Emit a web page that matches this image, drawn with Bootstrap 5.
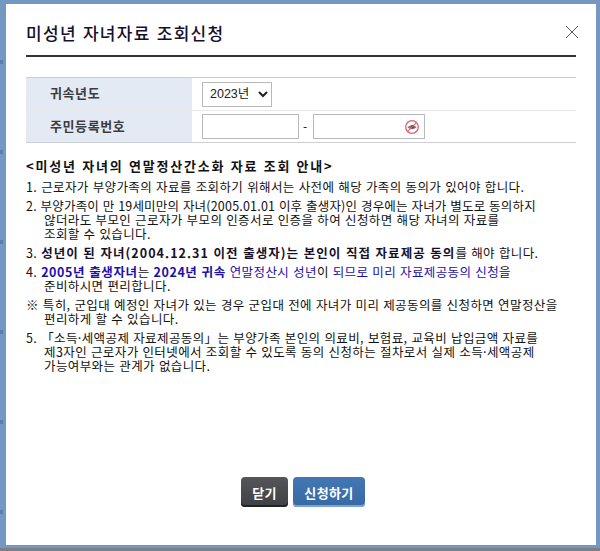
<!DOCTYPE html>
<html lang="ko">
<head>
<meta charset="utf-8">
<title>미성년 자녀자료 조회신청</title>
<link rel="stylesheet" href="https://cdn.jsdelivr.net/npm/bootstrap@5.3.0/dist/css/bootstrap.min.css">
<style>
html,body{height:100%;margin:0;overflow:hidden}
body{background:#7498c1;font-family:"Noto Sans CJK KR","Liberation Sans",sans-serif;color:#111}
.page-wrap{height:551px;padding:4px 4px 3px 6px;display:flex;flex-direction:column;border-bottom:3px solid #7c7f86;
 background-image:repeating-linear-gradient(to bottom,#7498c1 0 60px,#5d7ea6 60px 64px,#7498c1 64px 90px);background-size:3px 100%;background-repeat:no-repeat;background-color:#7498c1}
.sheet{background:#fff;width:590px;height:541px;padding:0 20px;display:flex;flex-direction:column;position:relative;flex:none}
.sheet-title{font-size:17px;line-height:20px;letter-spacing:1.3px;font-weight:500;color:#17102c;margin:19px 0 0;padding-bottom:12px;border-bottom:2px solid #333}
.x-close{position:absolute;left:559px;top:21px;width:14px;height:14px;padding:0;border:0;background:none;line-height:0}
.form-grid{margin-top:20px;border-top:1px solid #c9cdd1;border-bottom:1px solid #ccd0d6}
.form-line{height:32px}
.form-line+.form-line{border-top:1px solid #e8e9eb}
.form-head{width:166px;background:#e4eaf3;font-size:13px;font-weight:700;color:#3c3c40;padding-left:24px;letter-spacing:.6px;line-height:29px;height:100%}
.form-cell{padding-left:10px;gap:4px}
.year-pick{width:70px;height:25px;border:1px solid #b9b9b9;background:#fff;font-size:12.5px;padding:0 0 0 3px;color:#222;border-radius:0;font-family:"Liberation Sans","Noto Sans CJK KR",sans-serif}
.num-in{height:25px;border:1px solid #b9b9b9;border-radius:0;background:#fff;padding:0 4px;outline:0}
.num-a{width:97px}
.num-b{width:112px;position:relative;display:block}
.dash-sep{font-size:12px;line-height:1;width:6px}
.eye-ico{position:absolute;left:90px;top:4px;width:16px;height:16px}
.guide{font-size:12.5px;line-height:14px;margin-top:16px;white-space:nowrap;letter-spacing:.4px;color:#111}
.guide-h{font-weight:700;font-size:13px;letter-spacing:1.8px;line-height:14px;margin-bottom:7px;color:#111}
.gl{margin-bottom:5px;padding-left:18px;text-indent:-18px}
.gl b{font-weight:700;letter-spacing:1.05px;color:#17102c}
.gl .blu{color:#1c10a8}
.gl .blub{color:#1c10a8;font-weight:700;letter-spacing:.6px}
.sp-tight{letter-spacing:.2px}
.act-bar{margin-top:auto;padding-bottom:38px;gap:5px;justify-content:center;padding-left:4px}
.act-btn{height:30px;border-radius:4px;font-size:13px;font-weight:700;color:#fff;padding:0;line-height:27px;border:0;letter-spacing:.4px}
.act-dark{width:47px;background:linear-gradient(#55565a,#3f4043);box-shadow:inset 0 -2px 0 #232325}
.act-blue{width:72px;background:linear-gradient(#4378b4,#3768a3);box-shadow:inset 0 -2px 0 #7fa3cf}
</style>
</head>
<body>
<div class="page-wrap">
  <div class="sheet">
    <h1 class="sheet-title">미성년 자녀자료 조회신청</h1>
    <button type="button" class="x-close" aria-label="닫기">
      <svg width="14" height="14" viewBox="0 0 14 14"><path d="M1 1L13 13M13 1L1 13" stroke="#555" stroke-width="1" fill="none"/></svg>
    </button>
    <div class="form-grid">
      <div class="form-line d-flex align-items-center">
        <div class="form-head">귀속년도</div>
        <div class="form-cell d-flex align-items-center">
          <select class="year-pick"><option>2023년</option></select>
        </div>
      </div>
      <div class="form-line d-flex align-items-center">
        <div class="form-head">주민등록번호</div>
        <div class="form-cell d-flex align-items-center">
          <input class="num-in num-a" type="text" aria-label="앞자리">
          <span class="dash-sep">-</span>
          <span class="num-b num-in">
            <svg class="eye-ico" viewBox="0 0 16 16"><circle cx="8" cy="8" r="6.3" fill="#fff" stroke="#e25f68" stroke-width="1.3"/><path d="M3.4 8.2C5 5.8 11 5.8 12.6 8.2C11 10.4 5 10.4 3.4 8.2Z" fill="#7b7f8c"/><circle cx="8.4" cy="7.9" r="1.9" fill="#4b5062"/><path d="M3.8 12.2L12.2 3.8" stroke="#e25f68" stroke-width="1.1"/></svg>
          </span>
        </div>
      </div>
    </div>
    <div class="guide">
      <div class="guide-h">&lt;미성년 자녀의 연말정산간소화 자료 조회 안내&gt;</div>
      <div class="gl">1. 근로자가 부양가족의 자료를 조회하기 위해서는 사전에 해당 가족의 동의가 있어야 합니다.</div>
      <div class="gl"><span class="sp-tight">2. 부양가족이 만 19세미만의 자녀(2005.01.01 이후 출생자)인 경우에는 자녀가 별도로 동의하지</span><br>않더라도 부모인 근로자가 부모의 인증서로 인증을 하여 신청하면 해당 자녀의 자료를<br>조회할 수 있습니다.</div>
      <div class="gl">3. <b>성년이 된 자녀(2004.12.31 이전 출생자)는 본인이 직접 자료제공 동의</b>를 해야 합니다.</div>
      <div class="gl">4. <span class="blub">2005년 출생자녀</span>는 <span class="blub">2024년 귀속</span> <span class="blu">연말정산시 성년</span>이 <span class="blu">되므로 미리 자료제공동의 신청</span>을<br>준비하시면 편리합니다.</div>
      <div class="gl">※ 특히, 군입대 예정인 자녀가 있는 경우 군입대 전에 자녀가 미리 제공동의를 신청하면 연말정산을<br>편리하게 할 수 있습니다.</div>
      <div class="gl">5. 「소득·세액공제 자료제공동의」는 부양가족 본인의 의료비, 보험료, 교육비 납입금액 자료를<br>제3자인 근로자가 인터넷에서 조회할 수 있도록 동의 신청하는 절차로서 실제 소득·세액공제<br>가능여부와는 관계가 없습니다.</div>
    </div>
    <div class="act-bar d-flex">
      <button type="button" class="btn act-btn act-dark">닫기</button>
      <button type="button" class="btn act-btn act-blue">신청하기</button>
    </div>
  </div>
</div>
<script src="https://cdn.jsdelivr.net/npm/bootstrap@5.3.0/dist/js/bootstrap.bundle.min.js"></script>
</body>
</html>
